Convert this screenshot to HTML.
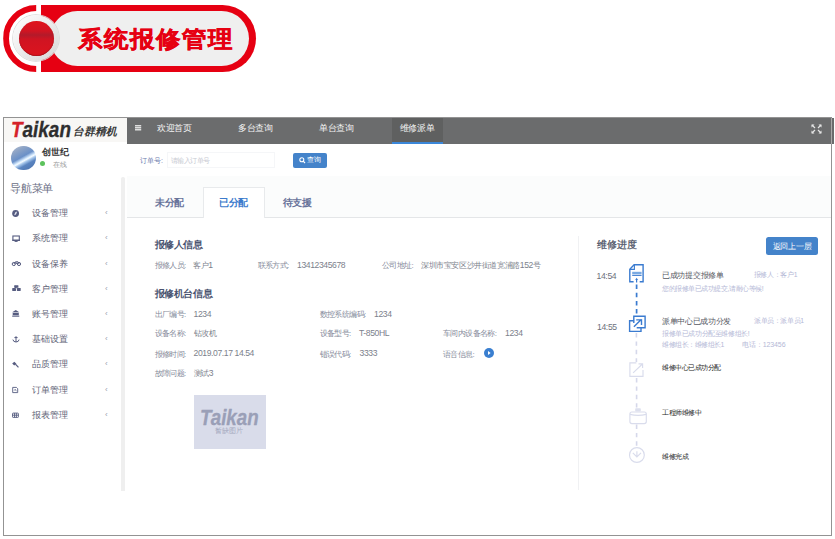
<!DOCTYPE html>
<html><head><meta charset="utf-8">
<style>
*{margin:0;padding:0;box-sizing:border-box}
html,body{width:835px;height:539px;overflow:hidden;background:#fff;font-family:"Liberation Sans",sans-serif}
.a{position:absolute;white-space:nowrap;line-height:1}
/* banner */
#c{left:3.2px;top:5.1px;width:66.8px;height:66.8px;border-radius:50%;border:6.4px solid #e60012;clip-path:inset(0 calc(100% - 33px) 0 0)}
#pr{left:41.2px;top:5.1px;width:215.1px;height:66.8px;background:#e60012;border-radius:0 33.4px 33.4px 0}
#pg{left:49.6px;top:10.9px;width:199.4px;height:54.9px;background:#efefef;border-radius:27.5px}
#ring{left:13.3px;top:14.5px;width:46px;height:46px;border-radius:50%;background:linear-gradient(135deg,#ffffff 0%,#f0f0f0 40%,#d6d6d6 100%);box-shadow:0 0 0 0.8px #d8d8d8}
#ball{left:18.8px;top:20.8px;width:35.4px;height:35.4px;border-radius:50%;background:linear-gradient(180deg,#e0141c 0%,#d21422 28%,#b31a2a 40%,#d01422 52%,#dc141e 100%);box-shadow:inset 0 -0.6px 1px #9a0c14}
#bt{left:78px;top:28px;font-size:24px;font-weight:900;color:#e60012;letter-spacing:2.1px;transform:scaleY(0.94);transform-origin:0 0;-webkit-text-stroke:0.5px #e60012}
/* frame */
#frame{left:3px;top:117px;width:829px;height:419px;border:1px solid #939393}
#logo{left:4px;top:118px;width:123px;height:24px;background:#f8f7f5}
#hdr{left:127px;top:117.5px;width:707px;height:26px;background:#6b6c6d}
#hact{left:392.2px;top:117.5px;width:51px;height:26.3px;background:#5f6060;border-bottom:2px solid #3b87d9}
.ht{font-size:8.6px;color:#f4f4f4;top:124.4px;letter-spacing:-0.3px}
#tk{left:11px;top:118.5px;font-size:22px;font-weight:bold;font-style:italic;color:#2e2e2e;transform:scaleX(0.86);transform-origin:0 0;-webkit-text-stroke:0.3px #2e2e2e}
#tk b{color:#d52229;-webkit-text-stroke:0.3px #d52229}
#tk2{left:72.6px;top:126.2px;font-size:10.8px;font-style:italic;font-weight:bold;color:#3a3a3a}
#av{left:11.2px;top:145.9px;width:24.6px;height:24.6px;border-radius:50%;background:linear-gradient(151deg,#b8c2d2 0%,#8ea4c6 22%,#6a90c8 45%,#d8ecff 55%,#f4faff 58%,#a8c8ec 63%,#5a84c0 72%,#4a70aa 100%)}
.side{font-size:8.6px;color:#5e6276}
.ico{color:#4c5068;font-size:8px}
.chev{font-size:8px;color:#9aa0b0}
#sbar{left:121.1px;top:177px;width:3.5px;height:313.5px;background:#efefef;border-radius:1.7px 1.7px 0 0}
/* search */
#tabbg{left:127px;top:176px;width:704px;height:41.5px;background:#fbfcfc;border-bottom:1px solid #e4e6e8}
#acttab{left:203px;top:187.3px;width:62px;height:31px;background:#fff;border:1px solid #e8eaec;border-bottom:none}
.tab{font-size:9.6px;font-weight:bold;color:#68739a;top:198px;letter-spacing:-0.4px}
#inp{left:167px;top:152px;width:108px;height:16px;border:1px solid #f5f6f8;background:#fff}
#btn{left:292.5px;top:152.8px;width:34px;height:15px;background:#4483ca;border-radius:2px}
.lbl{font-size:8px;color:#858a9a;letter-spacing:-0.6px}
.val{font-size:8.6px;color:#7c7f8c;letter-spacing:-0.4px}
.val i,.tm i,.sm i{font-style:normal;font-size:8px}
.h2{font-size:9.6px;font-weight:bold;color:#4a5370;letter-spacing:-0.4px}
#img{left:193.5px;top:395px;width:72.5px;height:54px;background:#d9dcea}
#rline{left:578px;top:236px;width:1px;height:254px;background:#f0f1f3}
#back{left:765.6px;top:237px;width:52px;height:17.8px;background:#4483ca;border-radius:2.5px}
.tm{font-size:8.6px;color:#6e717c;letter-spacing:-0.35px}
.st{font-size:7.6px;color:#55575f}
.sm{font-size:6.3px;color:#b4b8d6}
.st2{font-size:6.6px;color:#222}
</style></head><body>
<div class="a" id="c"></div>
<div class="a" id="pr"></div>
<div class="a" id="pg"></div>
<div class="a" id="ring"></div>
<div class="a" id="ball"></div>
<div class="a" id="bt">系统报修管理</div>

<div class="a" id="frame"></div>
<div class="a" id="logo"></div>
<div class="a" id="hdr"></div>
<div class="a" id="hact"></div>
<div class="a" style="left:831px;top:118px;width:1px;height:25.5px;background:#a9a9a9"></div>
<!-- hamburger -->
<svg class="a" style="left:135px;top:125px" width="7" height="6" viewBox="0 0 7 6"><rect x="0" y="0" width="6.2" height="1.5" fill="#dedede"/><rect x="0" y="2" width="6.2" height="1.5" fill="#dedede"/><rect x="0" y="4" width="6.2" height="1.5" fill="#dedede"/></svg>
<div class="a ht" style="left:157px">欢迎首页</div>
<div class="a ht" style="left:238px">多台查询</div>
<div class="a ht" style="left:319px">单台查询</div>
<div class="a ht" style="left:399.5px">维修派单</div>
<!-- fullscreen icon -->
<svg class="a" style="left:811px;top:123.5px" width="11" height="10" viewBox="0 0 11 10"><g stroke="#e6e6e6" stroke-width="1.2" fill="none"><path d="M1 1L4 4M10 1L7 4M1 9L4 6M10 9L7 6"/></g><g fill="#e6e6e6"><path d="M0.5 0.5h3l-3 3z M10.5 0.5h-3l3 3z M0.5 9.5h3l-3-3z M10.5 9.5h-3l3-3z"/></g></svg>

<!-- logo -->
<div class="a" id="tk"><b>T</b>aikan</div>
<div class="a" id="tk2">台群精机</div>
<div class="a" id="av"></div>
<div class="a" style="left:41.5px;top:147.7px;font-size:9px;font-weight:bold;color:#333">创世纪</div>
<div class="a" style="left:40.2px;top:161.1px;width:5.2px;height:5.2px;border-radius:50%;background:#5cc25c"></div>
<div class="a" style="left:53px;top:160.5px;font-size:7px;color:#999">在线</div>
<div class="a" style="left:10.3px;top:182.5px;font-size:11px;color:#6a6e84;letter-spacing:-0.35px">导航菜单</div>

<div class="a" id="sbar"></div>
<div class="a side" style="left:32px;top:209.1px">设备管理</div>
<div class="a side" style="left:32px;top:234.3px">系统管理</div>
<div class="a side" style="left:32px;top:259.5px">设备保养</div>
<div class="a side" style="left:32px;top:284.7px">客户管理</div>
<div class="a side" style="left:32px;top:309.9px">账号管理</div>
<div class="a side" style="left:32px;top:335.1px">基础设置</div>
<div class="a side" style="left:32px;top:360.3px">品质管理</div>
<div class="a side" style="left:32px;top:385.5px">订单管理</div>
<div class="a side" style="left:32px;top:410.7px">报表管理</div>
<div class="a chev" style="left:105px;top:209.1px">‹</div>
<div class="a chev" style="left:105px;top:234.3px">‹</div>
<div class="a chev" style="left:105px;top:259.5px">‹</div>
<div class="a chev" style="left:105px;top:284.7px">‹</div>
<div class="a chev" style="left:105px;top:309.9px">‹</div>
<div class="a chev" style="left:105px;top:335.1px">‹</div>
<div class="a chev" style="left:105px;top:360.3px">‹</div>
<div class="a chev" style="left:105px;top:385.5px">‹</div>
<div class="a chev" style="left:105px;top:410.7px">‹</div>
<!-- side icons -->
<svg class="a" style="left:0;top:200px" width="30" height="225" viewBox="0 200 30 225">
 <g fill="#565c80">
  <circle cx="15.6" cy="213.5" r="3.4"/>
 </g>
 <path d="M14.2 215.2L15.3 212.3L17.2 211.6L16 214.6z" fill="#dfe2ee"/>
 <g stroke="#565c80" fill="none" stroke-width="1.1">
  <rect x="12.9" y="236" width="6.4" height="4.4"/>
 </g>
 <rect x="12.4" y="239.6" width="7.4" height="1.3" fill="#565c80"/>
 <rect x="14.6" y="241" width="3" height="0.9" fill="#565c80"/>
 <g stroke="#565c80" fill="none" stroke-width="1">
  <circle cx="13.8" cy="264" r="1.6"/><circle cx="19" cy="264" r="1.6"/>
  <path d="M13.8 264L15.6 261.8H18L19 264M15.6 261.8L16.6 264"/>
 </g>
 <g fill="#565c80">
  <path d="M14.3 285.2l2.2 1v2.2l-2.2 -1z M16.5 285.2l2.2 1" />
  <rect x="14.6" y="285.2" width="3.8" height="2.6" rx="0.4"/>
  <rect x="12.2" y="288" width="3.8" height="2.9" rx="0.4"/>
  <rect x="16.9" y="288" width="3.8" height="2.9" rx="0.4"/>
 </g>
 <path d="M13.9 287.1h1.3 M18 287.1h1" stroke="#fff" stroke-width="0"/>
 <g fill="#565c80">
  <path d="M15.75 310L19.3 312.2H12.2z"/>
  <rect x="12.7" y="312.8" width="6.1" height="2.4"/>
  <rect x="12.2" y="315.6" width="7.1" height="1.1"/>
 </g>
 <g stroke="#565c80" fill="none" stroke-width="1">
  <path d="M16 336.2V342 M14.4 337.6H17.6 M12.9 339.6Q13.3 342 16 342Q18.7 342 19.1 339.6"/>
 </g>
 <g fill="#565c80">
  <path d="M12.2 363.6L14.4 361.8L16.4 363.8L14.2 365.6z"/>
  <path d="M15 364.6L15.9 363.8L18.9 366.9L18 367.8z"/>
 </g>
 <g stroke="#565c80" fill="none" stroke-width="0.9">
  <path d="M12.7 387.4H16.4L17.7 388.7V392.6H12.7z"/>
 </g>
 <path d="M14.2 390.6L15.2 389.2L16.3 391.2" stroke="#565c80" stroke-width="0.7" fill="none"/>
 <g stroke="#565c80" fill="none" stroke-width="0.9">
  <rect x="12.5" y="413.1" width="5.9" height="4.3" rx="0.6"/>
  <path d="M12.5 415.2H18.4 M14.5 413.1V417.4 M16.4 413.1V417.4"/>
 </g>
</svg>

<!-- search -->
<div class="a" style="left:140px;top:156.5px;font-size:7px;color:#6d7cae">订单号:</div>
<div class="a" id="inp"></div>
<div class="a" style="left:170.5px;top:156.6px;font-size:7px;color:#c8cad2;letter-spacing:-0.5px">请输入订单号</div>
<div class="a" id="btn"></div>
<svg class="a" style="left:298.8px;top:157px" width="7" height="7" viewBox="0 0 7 7"><circle cx="2.8" cy="2.8" r="2" stroke="#fff" stroke-width="1.1" fill="none"/><path d="M4.2 4.2L6 6" stroke="#fff" stroke-width="1.2"/></svg>
<div class="a" style="left:307px;top:156.3px;font-size:7px;color:#fff;letter-spacing:-0.1px">查询</div>

<!-- tabs -->
<div class="a" id="tabbg"></div>
<div class="a" id="acttab"></div>
<div class="a tab" style="left:155px">未分配</div>
<div class="a tab" style="left:219px;color:#3c7bcc">已分配</div>
<div class="a tab" style="left:282.5px">待支援</div>

<!-- content left -->
<div class="a h2" style="left:154.5px;top:240.2px">报修人信息</div>
<div class="a lbl" style="left:154.5px;top:262.3px">报修人员:</div>
<div class="a val" style="left:193px;top:261.0px"><i>客户</i>1</div>
<div class="a lbl" style="left:257.5px;top:262.3px">联系方式:</div>
<div class="a val" style="left:297px;top:261.0px">13412345678</div>
<div class="a lbl" style="left:382px;top:262.3px">公司地址:</div>
<div class="a val" style="left:421px;top:261.0px"><i>深圳市宝安区沙井街道宽浦路</i>152<i>号</i></div>
<div class="a h2" style="left:154.5px;top:288.6px">报修机台信息</div>

<div class="a lbl" style="left:154.5px;top:310.8px">出厂编号:</div>
<div class="a val" style="left:193.5px;top:309.5px">1234</div>
<div class="a lbl" style="left:319.5px;top:310.8px">数控系统编码:</div>
<div class="a val" style="left:374px;top:309.5px">1234</div>

<div class="a lbl" style="left:154.5px;top:330.2px">设备名称:</div>
<div class="a val" style="left:193.5px;top:328.9px"><i>钻攻机</i></div>
<div class="a lbl" style="left:319.5px;top:330.2px">设备型号:</div>
<div class="a val" style="left:359px;top:328.9px">T-850HL</div>
<div class="a lbl" style="left:443px;top:330.2px">车间内设备名称:</div>
<div class="a val" style="left:505px;top:328.9px">1234</div>

<div class="a lbl" style="left:154.5px;top:350.7px">报修时间:</div>
<div class="a val" style="left:193.5px;top:349.4px">2019.07.17 14.54</div>
<div class="a lbl" style="left:319.5px;top:350.7px">错误代码:</div>
<div class="a val" style="left:359.5px;top:349.4px">3333</div>
<div class="a lbl" style="left:443px;top:350.7px">语音信息:</div>
<svg class="a" style="left:484px;top:348px" width="10" height="10" viewBox="0 0 10 10"><circle cx="5" cy="5" r="5" fill="#3a7fd0"/><path d="M4 3v4l2.6-2z" fill="#fff"/></svg>

<div class="a lbl" style="left:154.5px;top:370.0px">故障问题:</div>
<div class="a val" style="left:193.5px;top:368.7px"><i>测试</i>3</div>

<div class="a" id="img"></div>
<div class="a" style="left:200px;top:407.5px;font-size:21.5px;font-weight:bold;font-style:italic;color:#9a9fb7;transform:scaleX(0.87);transform-origin:0 0;-webkit-text-stroke:0.3px #9a9fb7">Taikan</div>
<div class="a" style="left:214.8px;top:428.3px;font-size:6.8px;color:#a4a8be">暂缺图片</div>

<!-- right panel -->
<div class="a" id="rline"></div>
<div class="a" style="left:596.5px;top:239.5px;font-size:9.6px;color:#4c5164;-webkit-text-stroke:0.25px #4c5164">维修进度</div>
<div class="a" id="back"></div>
<div class="a" style="left:772.6px;top:242.9px;font-size:8px;color:#fff;letter-spacing:-0.2px">返回上一层</div>

<div class="a tm" style="left:596.5px;top:272px">14:54</div>
<div class="a tm" style="left:597px;top:322.8px">14:55</div>

<!-- timeline icons -->
<svg class="a" style="left:620px;top:255px" width="35" height="220" viewBox="620 255 35 220">
 <g stroke="#3a7bd0" fill="none">
  <path d="M633.6 281.7H629.8V269.2L634.1 264.8H643.1V281.7H639.7" stroke-width="1.4"/>
  <path d="M634.4 265V269.4H630" stroke-width="1.1"/>
  <path d="M636.6 282.5V279" stroke-width="1.2"/>
 </g>
 <path d="M635.2 280l1.4-2.2 1.4 2.2z" fill="#3a7bd0"/>
 <rect x="632.2" y="271.8" width="9.4" height="2.2" fill="#7aaae2"/>
 <rect x="632.2" y="274.7" width="9.4" height="1.2" fill="#3a7bd0"/>
 <path d="M636.6 284.5V315" stroke="#3a7bd0" stroke-width="1.7" stroke-dasharray="4.5 3.7"/>
 <g stroke="#3a7bd0" stroke-width="1.4" fill="none">
  <path d="M633.8 323V316.2H645.1V327.7H636.7"/>
  <path d="M629.6 332.1V320.8H633.8 M641 327.7V331.4H629.6"/>
  <path d="M633.9 326.8L641.5 319.2 M636.2 319.9H641.5V325"/>
 </g>
 <path d="M636.4 333V362" stroke="#d5d8ea" stroke-width="1.6" stroke-dasharray="4.4 4"/>
 <g stroke="#d9dcec" stroke-width="1.15" fill="none">
  <path d="M636.4 362.9H629.9V376.3H643V370"/>
  <path d="M633.1 372.8L642.4 364 M638.5 363.9H642.6V368"/>
 </g>
 <path d="M636.6 378V408" stroke="#d5d8ea" stroke-width="1.6" stroke-dasharray="4.4 4"/>
 <g stroke="#d9dcec" stroke-width="1.15" fill="none">
  <rect x="629.9" y="412" width="16.4" height="11.6" rx="2"/>
  <path d="M630 414.4Q638 416.5 646.2 414.4"/>
 </g>
 <rect x="635.2" y="408.2" width="5.6" height="3.4" rx="0.8" fill="#dde0ee"/>
 <path d="M636.6 424.5V447" stroke="#d5d8ea" stroke-width="1.6" stroke-dasharray="4.4 4"/>
 <g stroke="#d9dcec" stroke-width="1.15" fill="none">
  <circle cx="636.9" cy="455" r="7.4"/>
  <path d="M636.9 451.3V456.6 M632.8 452.8L636.9 457L641 452.8"/>
 </g>
</svg>

<div class="a st" style="left:662px;top:271.8px;letter-spacing:-0.3px">已成功提交报修单</div>
<div class="a sm" style="left:753.5px;top:272px;font-size:6.8px;letter-spacing:-0.3px">报修人：客户1</div>
<div class="a sm" style="left:662px;top:284.6px;font-size:7px;letter-spacing:-0.45px">您的报修单已成功提交,请耐心等候!</div>

<div class="a st" style="left:662px;top:318.2px;letter-spacing:-0.35px">派单中心已成功分发</div>
<div class="a sm" style="left:754px;top:318px;font-size:6.8px;letter-spacing:-0.4px">派单员：派单员1</div>
<div class="a sm" style="left:662px;top:330.4px;font-size:7px;letter-spacing:-0.4px">报修单已成功分配至维修组长!</div>
<div class="a sm" style="left:662px;top:341px;font-size:7px;letter-spacing:-0.5px">维修组长：维修组长1</div>
<div class="a sm" style="left:742px;top:341px;font-size:7px;letter-spacing:-0.1px">电话：123456</div>

<div class="a st2" style="left:662px;top:365.2px;letter-spacing:-0.45px">维修中心已成功分配</div>
<div class="a st2" style="left:662px;top:410.3px;letter-spacing:-0.5px">工程师维修中</div>
<div class="a st2" style="left:662px;top:453.9px;letter-spacing:-0.4px">维修完成</div>
</body></html>
